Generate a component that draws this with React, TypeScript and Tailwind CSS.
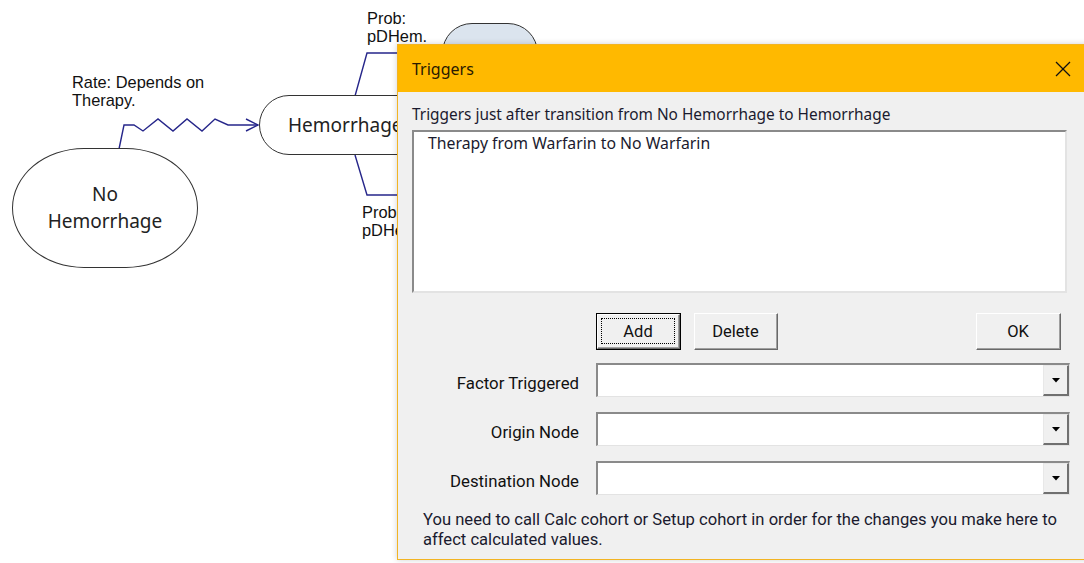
import React from "react";

const uiFont = { fontFamily: '"Noto Sans", "Open Sans", sans-serif' };
const ctlFont = { fontFamily: 'Roboto, "Liberation Sans", sans-serif' };
const diagFont = { fontFamily: '"Liberation Sans", Arial, sans-serif' };

function Connectors() {
  return (
    <svg
      className="absolute left-0 top-0"
      width={1084}
      height={563}
      viewBox="0 0 1084 563"
      fill="none"
      stroke="#26268a"
      strokeWidth={1.4}
      strokeLinejoin="miter"
    >
      {/* rate transition: zigzag arrow into Hemorrhage */}
      <polyline points="119,149 124,125 134,125 143,131 158,119 173,131 187,119 202,131 215,119 228,125 258,125" />
      <polyline points="246,119 258,125 246,131" />
      {/* probability branches leaving Hemorrhage */}
      <polyline points="355,96 367,53 420,53" />
      <polyline points="355,155 367,195 420,195" />
    </svg>
  );
}

function Diagram() {
  return (
    <div className="absolute inset-0">
      <Connectors />
      <div
        className="absolute left-[72px] top-[73px] text-[16.4px] leading-[18px] text-[#111]"
        style={diagFont}
      >
        Rate: Depends on
        <br />
        Therapy.
      </div>
      <div
        className="absolute left-[367px] top-[9px] text-[16.4px] leading-[18px] text-[#111]"
        style={diagFont}
      >
        Prob:
        <br />
        pDHem.
      </div>
      <div
        className="absolute left-[362px] top-[203px] text-[16.4px] leading-[18px] text-[#111]"
        style={diagFont}
      >
        Prob:
        <br />
        pDHem.
      </div>

      {/* node: No Hemorrhage */}
      <div
        className="absolute left-[12px] top-[148px] w-[186px] h-[120px] border-[1.5px] border-[#333] bg-white rounded-[72px/60px] flex items-center justify-center text-center text-[19px] leading-[27px] text-[#222]"
        style={uiFont}
      >
        No
        <br />
        Hemorrhage
      </div>

      {/* node: Hemorrhage */}
      <div
        className="absolute left-[259px] top-[95px] w-[170px] h-[60px] border-[1.5px] border-[#333] bg-white rounded-[30px] flex items-center pl-[28px] text-[19px] text-[#222]"
        style={uiFont}
      >
        Hemorrhage
      </div>

      {/* node: partially hidden, selected fill */}
      <div className="absolute left-[442px] top-[23px] w-[96px] h-[60px] border-[1.5px] border-[#333] bg-[#dbe4ee] rounded-[30px]" />
    </div>
  );
}

function Button({ label, isDefault = false, className = "" }: { label: string; isDefault?: boolean; className?: string }) {
  return (
    <div
      className={`h-[37px] w-[85px] ${isDefault ? "border border-black" : ""} ${className}`}
    >
      <div className="h-full w-full border-t border-l border-t-white border-l-white border-b border-r border-b-[#696969] border-r-[#696969] bg-[#f0f0f0]">
        <div className="h-full w-full border-b border-r border-b-[#a0a0a0] border-r-[#a0a0a0] flex items-center justify-center p-[3px]">
          <div
            className={`h-full w-full flex items-center justify-center pt-[3px] text-[16.5px] text-[#111] ${isDefault ? "border border-dotted border-black" : ""}`}
            style={ctlFont}
          >
            {label}
          </div>
        </div>
      </div>
    </div>
  );
}

function Combo({ label }: { label: string }) {
  return (
    <div className="flex items-center h-[34px]">
      <div className="w-[184px] pr-[17px] pt-[7px] text-right text-[16.8px] text-[#111]" style={ctlFont}>
        {label}
      </div>
      <div className="w-[474px] h-full border-t-2 border-l-2 border-t-[#8a8a8a] border-l-[#8a8a8a] border-b border-r border-b-[#e3e3e3] border-r-[#e3e3e3] bg-white flex justify-end">
        <div className="w-[26px] h-full border-t border-l border-t-[#e8e8e8] border-l-[#e8e8e8] border-b-2 border-r-2 border-b-[#707070] border-r-[#707070] bg-[#f0f0f0] flex items-center justify-center">
          <svg width="10" height="6" viewBox="0 0 10 6">
            <polygon points="1,1 9,1 5,5.5" fill="#000" />
          </svg>
        </div>
      </div>
    </div>
  );
}

function TriggersDialog() {
  return (
    <div className="absolute left-[397px] top-[44px] w-[692px] h-[516px] border border-[#f2b423] bg-[#f0f0f0] flex flex-col shadow-[0_0_6px_rgba(0,0,0,0.18)]">
      <div className="h-[47px] shrink-0 bg-[#ffb900] flex items-center justify-between pl-[14px] pr-[17px]">
        <span className="text-[16px] text-[#2a1a00]" style={uiFont}>
          Triggers
        </span>
        <svg width="16" height="16" viewBox="0 0 16 16" stroke="#111" strokeWidth="1.3">
          <line x1="1" y1="1" x2="15" y2="15" />
          <line x1="15" y1="1" x2="1" y2="15" />
        </svg>
      </div>

      <div className="flex flex-col pl-[14px] pt-[13px]">
        <div className="h-[20px] leading-[20px] text-[15.4px] text-[#1a1a2e] whitespace-nowrap" style={uiFont}>
          Triggers just after transition from No Hemorrhage to Hemorrhage
        </div>

        <div className="mt-[5px] w-[655px] h-[163px] border-t-2 border-l-2 border-t-[#8a8a8a] border-l-[#8a8a8a] border-b-2 border-r-2 border-b-[#e3e3e3] border-r-[#e3e3e3] bg-white px-[14px] pt-[1px]">
          <div className="text-[15.8px] leading-[20px] text-[#1a1a2e]" style={uiFont}>
            Therapy from Warfarin to No Warfarin
          </div>
        </div>

        <div className="mt-[20px] flex w-[655px]">
          <div className="w-[184px]" />
          <Button label="Add" isDefault />
          <Button label="Delete" className="ml-[13px] !w-[84px]" />
          <Button label="OK" className="ml-auto mr-[6px]" />
        </div>

        <div className="mt-[13px] flex flex-col gap-[15px]">
          <Combo label="Factor Triggered" />
          <Combo label="Origin Node" />
          <Combo label="Destination Node" />
        </div>

        <div className="mt-[15px] ml-[11px] text-[16.6px] leading-[20px] text-[#1a1a2e] whitespace-nowrap" style={ctlFont}>
          You need to call Calc cohort or Setup cohort in order for the changes you make here to
          <br />
          affect calculated values.
        </div>
      </div>
    </div>
  );
}

export default function App() {
  return (
    <div className="relative w-[1084px] h-[563px] bg-white overflow-hidden">
      <Diagram />
      <TriggersDialog />
    </div>
  );
}
